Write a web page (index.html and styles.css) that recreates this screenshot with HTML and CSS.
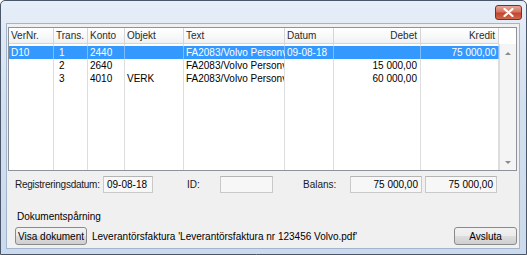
FILE: index.html
```html
<!DOCTYPE html>
<html>
<head>
  <link rel="stylesheet" href="styles.css">
</head>
<body>
  <div class="window">
    <div class="titlebar">
      <div class="close-btn">
        <svg width="11" height="9" viewBox="0 0 11 9">
          <path d="M1.5 1 L9.5 8 M9.5 1 L1.5 8" stroke="#fff" stroke-width="2.2" stroke-linecap="round"/>
        </svg>
      </div>
    </div>

    <div class="client">
      <div class="grid">
        <div class="table">
          <div class="header">
            <div class="hcell w-ver">VerNr.</div>
            <div class="hcell w-trans">Trans.</div>
            <div class="hcell w-konto">Konto</div>
            <div class="hcell w-obj">Objekt</div>
            <div class="hcell w-text">Text</div>
            <div class="hcell w-datum">Datum</div>
            <div class="hcell w-debet right">Debet</div>
            <div class="hcell w-kredit right">Kredit</div>
          </div>
          <div class="body">
            <div class="col w-ver">
              <div class="cell sel">D10</div>
              <div class="cell"></div>
              <div class="cell"></div>
            </div>
            <div class="col w-trans">
              <div class="cell sel">1</div>
              <div class="cell">2</div>
              <div class="cell">3</div>
            </div>
            <div class="col w-konto">
              <div class="cell sel">2440</div>
              <div class="cell">2640</div>
              <div class="cell">4010</div>
            </div>
            <div class="col w-obj">
              <div class="cell sel"></div>
              <div class="cell"></div>
              <div class="cell">VERK</div>
            </div>
            <div class="col w-text">
              <div class="cell sel">FA2083/Volvo Personv</div>
              <div class="cell">FA2083/Volvo Personv</div>
              <div class="cell">FA2083/Volvo Personv</div>
            </div>
            <div class="col w-datum">
              <div class="cell sel">09-08-18</div>
              <div class="cell"></div>
              <div class="cell"></div>
            </div>
            <div class="col w-debet">
              <div class="cell sel right"></div>
              <div class="cell right">15 000,00</div>
              <div class="cell right">60 000,00</div>
            </div>
            <div class="col w-kredit">
              <div class="cell sel right">75 000,00</div>
              <div class="cell right"></div>
              <div class="cell right"></div>
            </div>
          </div>
        </div>
        <div class="vscroll-wrap">
          <div class="vscroll">
            <span class="arrow up"></span>
            <span class="arrow down"></span>
          </div>
        </div>
      </div>

      <div class="fields">
        <span class="label l-reg">Registreringsdatum:</span>
        <span class="box b-date">09-08-18</span>
        <span class="label l-id">ID:</span>
        <span class="box b-id"></span>
        <span class="label l-bal">Balans:</span>
        <span class="box b-sum">75 000,00</span>
        <span class="box b-sum">75 000,00</span>
      </div>

      <div class="doc-title">Dokumentspårning</div>
      <div class="doc-row">
        <button class="btn btn-visa">Visa dokument</button>
        <span class="doc-name">Leverantörsfaktura 'Leverantörsfaktura nr 123456 Volvo.pdf'</span>
        <button class="btn btn-close">Avsluta</button>
      </div>
    </div>
  </div>
</body>
</html>
```

FILE: styles.css
```css
body {
  margin: 0;
  background: #fff;
  font-family: 'Liberation Sans', Arial, sans-serif;
  font-size: 10px;
  color: #000;
}

.window {
  width: 527px;
  height: 255px;
  box-sizing: border-box;
  border: 1px solid #4a5669;
  border-radius: 5px 5px 0 0;
  background: linear-gradient(to bottom, #e6eef8 0%, #d3e0f0 40%, #cbdaec 100%);
  display: flex;
  flex-direction: column;
}

.titlebar {
  height: 22px;
  flex: none;
  display: flex;
  justify-content: flex-end;
  padding-right: 4px;
}

.close-btn {
  width: 25px;
  height: 13px;
  margin-top: 4px;
  border: 1px solid #7a2d25;
  border-radius: 3px;
  background: linear-gradient(to bottom, #e8a89a 0%, #d67460 45%, #c3452e 55%, #d0684e 100%);
  display: flex;
  justify-content: center;
  align-items: center;
}

.client {
  flex: 1;
  margin: 0 6px 5px 5px;
  border: 1px solid #a3b5cc;
  background: #f0f0f0;
  padding: 3px 1px 0 1px;
  display: flex;
  flex-direction: column;
}

/* list */
.grid {
  height: 144px;
  width: 509px;
  box-sizing: border-box;
  border: 1px solid #8e939b;
  background: #fff;
  display: flex;
}

.table {
  width: 490px;
  display: flex;
  flex-direction: column;
}

.header {
  display: flex;
  height: 16px;
  box-sizing: border-box;
  border-bottom: 1px solid #d5d5d5;
  background: linear-gradient(to bottom, #ffffff 0%, #f7f8f9 60%, #eff0f2 100%);
}

.hcell {
  box-sizing: border-box;
  border-right: 1px solid #d5d5d5;
  padding: 0 3px 0 2px;
  line-height: 15px;
  color: #2a2a2a;
  white-space: nowrap;
  overflow: hidden;
}

.body {
  flex: 1;
  display: flex;
}

.col {
  box-sizing: border-box;
  border-right: 1px solid #dedede;
  padding-top: 2px;
}

.cell {
  height: 13px;
  line-height: 13px;
  padding: 0 3px 0 2px;
  white-space: nowrap;
  overflow: hidden;
}

.cell.sel {
  background: #3399ff;
  color: #fff;
  margin-right: -1px;
  box-shadow: inset -1px 0 0 #7dbcff;
}

.right {
  text-align: right;
}

.w-ver { width: 45px; }
.w-trans { width: 34px; }
.w-konto { width: 37px; }
.w-obj { width: 59px; }
.w-text { width: 101px; }
.w-datum { width: 49px; }
.w-debet { width: 87px; }
.w-kredit { width: 78px; }

.w-trans .cell { padding-left: 5px; }

.vscroll-wrap {
  width: 17px;
  display: flex;
  flex-direction: column;
  padding-top: 16px;
}

.vscroll {
  flex: 1;
  box-sizing: border-box;
  border-left: 1px solid #dcdcdc;
  background: #f4f4f4;
  display: flex;
  flex-direction: column;
  justify-content: space-between;
  align-items: center;
  padding: 8px 0 6px;
}

.arrow {
  width: 0;
  height: 0;
  border-left: 3px solid transparent;
  border-right: 3px solid transparent;
}

.arrow.up { border-bottom: 3px solid #8a8a8a; }
.arrow.down { border-top: 3px solid #8a8a8a; }

/* totals */
.fields {
  display: flex;
  align-items: center;
  margin-top: 5px;
  height: 17px;
  white-space: nowrap;
}

.label {
  color: #1a1a1a;
  flex: none;
}

.l-reg { width: 88px; margin-left: 7px; letter-spacing: -0.25px; }
.l-id { width: 33px; margin-left: 34px; }
.l-bal { width: 47px; margin-left: 30px; }

.box {
  height: 17px;
  box-sizing: border-box;
  border: 1px solid #c9c9c9;
  border-top-color: #b4b4b4;
  background: #f7f7f7;
  line-height: 15px;
  padding: 0 3px;
  flex: none;
}

.b-date { width: 50px; }
.b-id { width: 53px; }
.b-sum { width: 72px; text-align: right; }
.b-sum + .b-sum { margin-left: 3px; }

/* document */
.doc-title {
  margin: 17px 0 0 9px;
  line-height: 13px;
}

.doc-row {
  display: flex;
  align-items: center;
  margin-top: 4px;
  white-space: nowrap;
}

.btn {
  height: 18px;
  box-sizing: border-box;
  border: 1px solid #8a8a8a;
  border-radius: 3px;
  background: linear-gradient(to bottom, #f2f2f2 0%, #ebebeb 50%, #dddddd 51%, #cfcfcf 100%);
  font-family: 'Liberation Sans', Arial, sans-serif;
  font-size: 10px;
  color: #000;
  padding: 0;
  white-space: nowrap;
}

.btn-visa {
  width: 72px;
  margin-left: 7px;
}

.doc-name {
  margin-left: 5px;
  flex: 1;
}

.btn-close {
  width: 63px;
  margin-right: 1px;
}
```
